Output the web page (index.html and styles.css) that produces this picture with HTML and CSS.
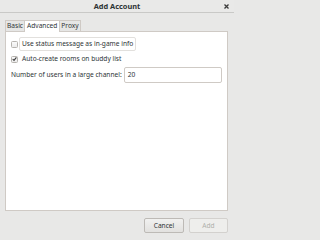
FILE: index.html
```html
<!DOCTYPE html>
<html>
<head>
<meta charset="utf-8">
<link rel="stylesheet" href="styles.css">
</head>
<body>
<div class="window">
  <div class="titlebar">
    <span class="title">Add Account</span>
    <svg class="close" width="5" height="5" viewBox="0 0 5 5"><path d="M0.5 0.5 L4.5 4.5 M4.5 0.5 L0.5 4.5" stroke="#3a3a3a" stroke-width="1.3"/></svg>
  </div>
  <div class="content">
    <div class="tabs">
      <div class="tab">Basic</div>
      <div class="tab active">Advanced</div>
      <div class="tab">Proxy</div>
    </div>
    <div class="panel">
      <div class="row">
        <span class="check"></span>
        <span class="label focus">Use status message as in-game info</span>
      </div>
      <div class="row">
        <span class="check checked"><svg width="6" height="6" viewBox="0 0 6 6"><path d="M0.8 3 L2.4 4.7 L5.3 1" fill="none" stroke="#3c3c3c" stroke-width="1.3"/></svg></span>
        <span class="label">Auto-create rooms on buddy list</span>
      </div>
      <div class="row entry-row">
        <span class="label plain">Number of users in a large channel:</span>
        <span class="entry">20</span>
      </div>
    </div>
    <div class="buttons">
      <div class="btn">Cancel</div>
      <div class="btn disabled">Add</div>
    </div>
  </div>
</div>
</body>
</html>
```
FILE: styles.css
```css
html, body {
  margin: 0;
  padding: 0;
  background: #e8e8e7;
}
body {
  width: 234px;
  height: 240px;
  font-family: "Noto Sans", "DejaVu Sans", sans-serif;
  font-size: 6.6px;
  color: #2e3436;
  overflow: hidden;
}
.window {
  display: flex;
  flex-direction: column;
  height: 240px;
}
.titlebar {
  height: 13px;
  box-sizing: border-box;
  border-bottom: 1px solid #c9c9c7;
  display: flex;
  align-items: center;
  justify-content: center;
  position: relative;
  background: #e9e9e8;
}
.title {
  font-weight: bold;
  font-size: 7.4px;
  color: #2e3436;
}
.close {
  position: absolute;
  right: 5px;
  top: 4px;
  display: block;
}
.content {
  flex: 1;
  display: flex;
  flex-direction: column;
  padding: 7px 6px 7px 5px;
}
.tabs {
  display: flex;
  height: 11px;
}
.tab {
  box-sizing: border-box;
  padding: 0 1px;
  height: 11px;
  line-height: 10px;
  border: 1px solid #cfcac5;
  border-bottom: none;
  background: #e6e6e5;
  color: #2e3436;
}
.tab + .tab {
  margin-left: -1px;
}
.tab.active {
  background: #ffffff;
  height: 12px;
  position: relative;
  z-index: 1;
  padding: 0 2px;
}
.panel {
  box-sizing: border-box;
  height: 180px;
  background: #ffffff;
  border: 1px solid #cfcac5;
  display: flex;
  flex-direction: column;
  padding: 5px 5px 0 5px;
  gap: 1px;
}
.row {
  display: flex;
  align-items: center;
  height: 14px;
  white-space: nowrap;
}
.check {
  box-sizing: border-box;
  width: 7px;
  height: 7px;
  border: 1px solid #b6b3ae;
  border-radius: 1.5px;
  background: linear-gradient(#fafafa, #ececec);
  display: flex;
  align-items: center;
  justify-content: center;
  margin-right: 1px;
}
.check svg {
  display: block;
}
.label {
  box-sizing: border-box;
  padding: 0 2px;
  height: 14px;
  line-height: 12px;
  border: 1px solid transparent;
}
.label.focus {
  border: 1px solid #e2e0dd;
  border-radius: 2px;
}
.label.plain {
  padding: 0;
  border: none;
  margin-right: 2px;
  line-height: 14px;
}
.entry-row {
  height: 16px;
}
.entry {
  box-sizing: border-box;
  width: 101px;
  height: 16px;
  line-height: 14px;
  border: 1px solid #cfcac5;
  border-radius: 2px;
  padding: 0 3px;
  background: #fff;
  color: #2e3436;
}
.buttons {
  display: flex;
  justify-content: flex-end;
  gap: 5px;
  margin-top: 7px;
}
.btn {
  box-sizing: border-box;
  width: 40px;
  height: 15px;
  line-height: 13px;
  text-align: center;
  border: 1px solid #bdbab6;
  border-radius: 2px;
  background: linear-gradient(#f1f1f0, #e2e1df);
  color: #2e3436;
}
.btn.disabled {
  width: 39px;
  background: #eeeeec;
  border-color: #d3d1ce;
  color: #aeb0ab;
}
```
